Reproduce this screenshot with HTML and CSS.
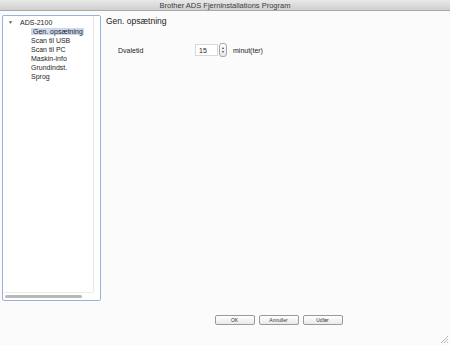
FILE: index.html
```html
<!DOCTYPE html>
<html lang="da">
<head>
  <meta charset="UTF-8">
  <title>Brother ADS Fjerninstallations Program</title>
  <link rel="stylesheet" href="styles.css">
</head>
<body>

  <div class="titlebar">Brother ADS Fjerninstallations Program</div>

  <div class="window">
    <div class="sidebar">
      <div class="tree-panel">
        <div class="tree-area">
          <ul class="tree">
            <li class="tree-root"><span class="arrow">&#9660;</span>ADS-2100</li>
            <li class="tree-item"><span class="selected">Gen. opsætning</span></li>
            <li class="tree-item">Scan til USB</li>
            <li class="tree-item">Scan til PC</li>
            <li class="tree-item">Maskin-info</li>
            <li class="tree-item">Grundindst.</li>
            <li class="tree-item">Sprog</li>
          </ul>
        </div>
        <div class="hscroll"><div class="hthumb"></div></div>
      </div>
    </div>

    <div class="content">
      <h1 class="section-title">Gen. opsætning</h1>

      <div class="field-row">
        <label class="field-label">Dvaletid</label>
        <div class="number-input">15</div>
        <div class="stepper">
          <span class="step-up"></span>
          <span class="step-down"></span>
        </div>
        <span class="unit">minut(ter)</span>
      </div>

      <div class="buttons">
        <button class="btn">OK</button>
        <button class="btn">Annuller</button>
        <button class="btn">Udfør</button>
      </div>
    </div>
  </div>

  <!-- resize grip -->
  <svg class="grip" width="10" height="10" viewBox="0 0 10 10">
    <path d="M9 2 L2 9 M9 5 L5 9 M9 8 L8 9" stroke="#b8b8b8" stroke-width="1" fill="none"/>
  </svg>

</body>
</html>
```

FILE: styles.css
```css
html, body {
  margin: 0;
  padding: 0;
}
body {
  width: 450px;
  height: 345px;
  font-family: "Liberation Sans", Arial, sans-serif;
  color: #1e1e1e;
  background: #fbfbfb;
  overflow: hidden;
  position: relative;
}
.titlebar {
  height: 11px;
  line-height: 11px;
  font-size: 7.5px;
  text-align: center;
  color: #3c3c3c;
  background: linear-gradient(#e9e9e9, #cfcfcf);
  border-bottom: 1px solid #a9a9a9;
  box-sizing: border-box;
}
.window {
  display: flex;
  height: 334px;
}
.sidebar {
  padding: 4px 0 0 2px;
}
.tree-panel {
  width: 99px;
  height: 286px;
  box-sizing: border-box;
  border: 1px solid #9cb0df;
  border-radius: 2px;
  background: #ffffff;
  display: flex;
  flex-direction: column;
}
.tree-area {
  flex: 1;
  margin-right: 6px;
  border-right: 1px solid #e8e8e8;
  border-bottom: 1px solid #ececec;
  border-bottom-right-radius: 2px;
}
.tree {
  list-style: none;
  margin: 0;
  padding: 2px 0 0 0;
  font-size: 7px;
  line-height: 9px;
}
.tree-root {
  padding-left: 5px;
}
.arrow {
  display: inline-block;
  width: 12px;
  font-size: 5px;
  color: #5a5a5a;
  vertical-align: 1px;
}
.tree-item {
  padding-left: 28px;
}
.selected {
  background: #cdd9f0;
  padding: 0 1px 0 2px;
}
.hscroll {
  height: 7px;
  padding: 2px 0 0 2px;
  box-sizing: border-box;
}
.hthumb {
  width: 77px;
  height: 3px;
  border-radius: 2px;
  background: #b9b9b9;
}
.content {
  flex: 1;
  display: flex;
  flex-direction: column;
  padding-left: 5px;
}
.section-title {
  margin: 5px 0 0 0;
  font-size: 8.5px;
  font-weight: normal;
  line-height: 11px;
  color: #222;
}
.field-row {
  display: flex;
  align-items: center;
  margin-top: 16px;
  font-size: 7px;
}
.field-label {
  width: 77px;
  padding-left: 12px;
}
.number-input {
  width: 23px;
  height: 12px;
  line-height: 12px;
  box-sizing: border-box;
  border: 1px solid #d8d8d8;
  background: #fff;
  padding-left: 3px;
}
.stepper {
  width: 6px;
  height: 12px;
  margin-left: 1px;
  border: 1px solid #a8a8a8;
  border-radius: 3px;
  background: linear-gradient(#fdfdfd, #e6e6e6);
  display: flex;
  flex-direction: column;
  align-items: center;
  justify-content: center;
  gap: 2px;
}
.step-up, .step-down {
  width: 0;
  height: 0;
  border-left: 1.5px solid transparent;
  border-right: 1.5px solid transparent;
}
.step-up {
  border-bottom: 2px solid #444;
}
.step-down {
  border-top: 2px solid #444;
}
.unit {
  margin-left: 6px;
}
.buttons {
  margin-top: auto;
  margin-bottom: 20px;
  display: flex;
  justify-content: center;
  gap: 4px;
  padding-left: 1px;
}
.btn {
  width: 40px;
  height: 10px;
  padding: 0;
  font-family: "Liberation Sans", Arial, sans-serif;
  font-size: 5px;
  color: #333;
  border: 1px solid #9a9a9a;
  border-radius: 2px;
  background: linear-gradient(#ffffff, #e9e9e9);
}
.grip {
  position: absolute;
  right: 1px;
  bottom: 1px;
}
```
